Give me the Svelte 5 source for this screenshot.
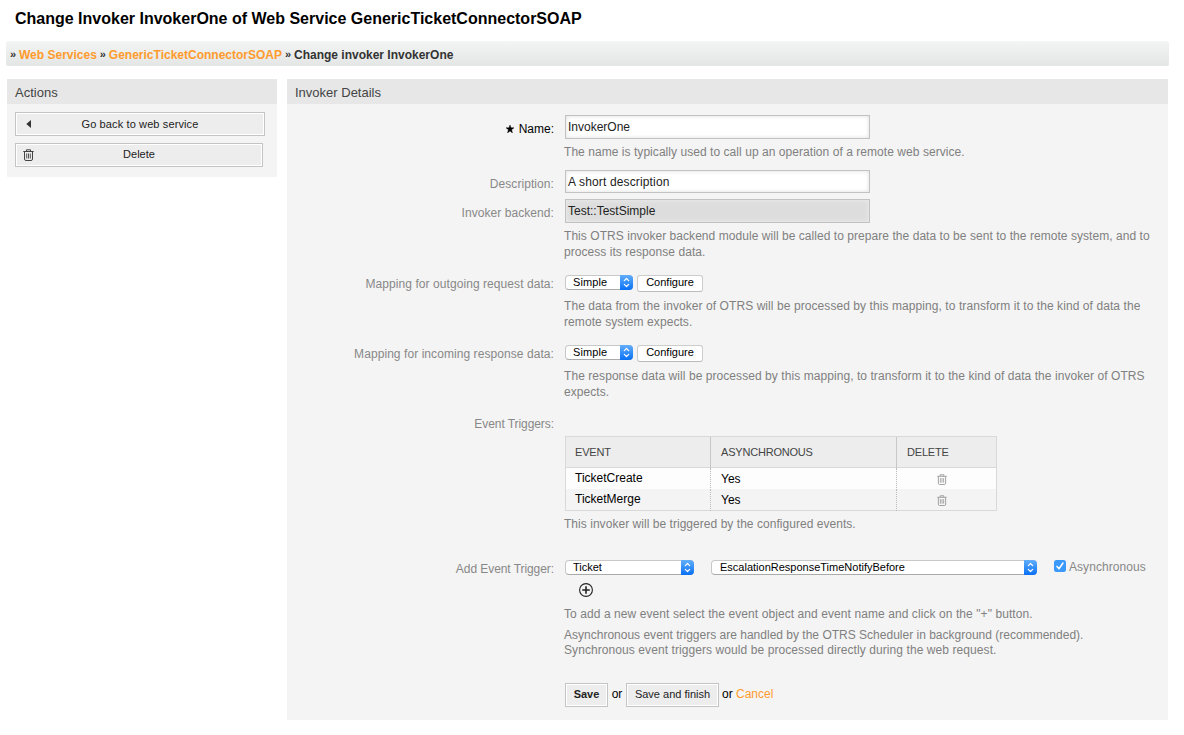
<script>
  const events = ['TicketCreate', 'TicketMerge'];
  const mappings = [
    {
      label: 'Mapping for outgoing request data:',
      hint: ['The data from the invoker of OTRS will be processed by this mapping, to transform it to the kind of data the', 'remote system expects.'],
      tracking: 0.075
    },
    {
      label: 'Mapping for incoming response data:',
      hint: ['The response data will be processed by this mapping, to transform it to the kind of data the invoker of OTRS', 'expects.'],
      tracking: 0.065
    }
  ];
</script>

{#snippet trash()}
  <svg class="trash" viewBox="0 0 11 12" width="11" height="12" fill="none" stroke="currentColor">
    <path d="M0.3 2.5H10.7M3.5 2.3V0.8H7.5V2.3M1.5 2.7V10Q1.5 11.5 3 11.5H8Q9.5 11.5 9.5 10V2.7" />
    <path d="M3.7 4.5V9.5M5.5 4.5V9.5M7.3 4.5V9.5" stroke-width="0.9" />
  </svg>
{/snippet}

{#snippet select(text, cls)}
  <div class="select {cls}">
    <span>{text}</span>
    <i>
      <svg viewBox="0 0 13 15" width="13" height="15" fill="none" stroke="#fff" stroke-width="1.2" stroke-linecap="round" stroke-linejoin="round">
        <path d="M4.3 5.7L6.5 3.5L8.7 5.7M4.3 9.3L6.5 11.5L8.7 9.3" />
      </svg>
    </i>
  </div>
{/snippet}

<div class="page">
  <h1>Change Invoker InvokerOne of Web Service GenericTicketConnectorSOAP</h1>
  <nav><b>»</b><a>Web Services</a><b>»</b><a>GenericTicketConnectorSOAP</a><b>»</b><span>Change invoker InvokerOne</span></nav>

  <div class="columns">
    <aside>
      <h2>Actions</h2>
      <div class="actions">
        <div class="btn back">
          <svg viewBox="0 0 5 8" width="5" height="8"><path d="M5 0V8L0.3 4Z" fill="#333" /></svg>
          <span>Go back to web service</span>
        </div>
        <div class="btn del">{@render trash()}<span>Delete</span></div>
      </div>
    </aside>

    <main>
      <h2>Invoker Details</h2>
      <div class="form">
        <div class="row name">
          <div class="label required">
            <svg viewBox="0 0 8 8" width="8" height="8"><path d="M4 0L5 2.8H8L5.6 4.7L6.5 8L4 6.1L1.5 8L2.4 4.7L0 2.8H3Z" stroke="#000" stroke-width="0.4" /></svg>Name:
          </div>
          <div class="field">
            <div class="input">InvokerOne</div>
            <p>The name is typically used to call up an operation of a remote web service.</p>
          </div>
        </div>
        <div class="row desc">
          <div class="label">Description:</div>
          <div class="field"><div class="input">A short description</div></div>
        </div>
        <div class="row backend">
          <div class="label">Invoker backend:</div>
          <div class="field">
            <div class="input readonly">Test::TestSimple</div>
            <p>This OTRS invoker backend module will be called to prepare the data to be sent to the remote system, and to<br />process its response data.</p>
          </div>
        </div>
        {#each mappings as m}
          <div class="row mapping">
            <div class="label">{m.label}</div>
            <div class="field">
              <div class="controls">
                {@render select('Simple', 'small')}
                <div class="configure">Configure</div>
              </div>
              <p style="letter-spacing: {m.tracking}px">{m.hint[0]}<br />{m.hint[1]}</p>
            </div>
          </div>
        {/each}
        <div class="row triggers">
          <div class="label">Event Triggers:</div>
          <div class="field">
            <div class="table">
              <div class="tr head"><span>EVENT</span><span>ASYNCHRONOUS</span><span>DELETE</span></div>
              {#each events as e}
                <div class="tr"><span>{e}</span><span class="yes">Yes</span><span class="bin">{@render trash()}</span></div>
              {/each}
            </div>
            <p>This invoker will be triggered by the configured events.</p>
          </div>
        </div>
        <div class="row add">
          <div class="label">Add Event Trigger:</div>
          <div class="field">
            <div class="controls">
              {@render select('Ticket', 'medium')}
              {@render select('EscalationResponseTimeNotifyBefore', 'large')}
              <svg class="check" viewBox="0 0 12 12" width="12" height="12">
                <rect width="12" height="12" rx="2.5" fill="#3b99fc" />
                <path d="M3 6.4L5 8.8L9 3" fill="none" stroke="#fff" stroke-width="1.5" stroke-linecap="round" stroke-linejoin="round" />
              </svg>
              <span class="async">Asynchronous</span>
            </div>
            <svg class="plus" viewBox="0 0 14 14" width="14" height="14" fill="none" stroke="#222">
              <circle cx="7" cy="7" r="6.4" stroke-width="1.1" />
              <path d="M7 3.2V10.8M3.2 7H10.8" stroke-width="1.6" />
            </svg>
            <p class="how">To add a new event select the event object and event name and click on the "+" button.</p>
            <p class="extra">Asynchronous event triggers are handled by the OTRS Scheduler in background (recommended).<br /><span>Synchronous event triggers would be processed directly during the web request.</span></p>
          </div>
        </div>
        <div class="row">
          <div class="label"></div>
          <div class="field submit">
            <div class="btn save">Save</div><span class="or">or</span>
            <div class="btn finish">Save and finish</div><span class="or2">or</span>
            <a>Cancel</a>
          </div>
        </div>
      </div>
    </main>
  </div>
</div>

<style>
  :global(body) { margin: 0; background: #fff; }
  .page, .page * { box-sizing: border-box; }
  .page {
    width: 1184px; height: 735px; overflow: hidden;
    font: 12px/16px "Liberation Sans", Arial, sans-serif;
    color: #000; white-space: nowrap;
  }
  h1 { margin: 0; padding: 9px 0 0 15px; height: 41px; font-size: 16px; line-height: 20px; font-weight: bold; }
  nav {
    display: flex; width: 1163px; height: 25px; margin-left: 6px; padding-left: 4px;
    border-radius: 2px; background: linear-gradient(#f3f5f5, #e3e6e5);
    font-weight: bold; line-height: 28px; color: #333;
  }
  nav b { width: 9px; font-size: 11px; line-height: 27px; }
  nav a + b { width: 12px; padding-left: 3px; }
  a { color: #ff9b2d; }
  .columns { display: flex; align-items: flex-start; gap: 10px; padding: 13px 0 0 7px; }
  aside { width: 270px; height: 98px; background: #f4f4f4; }
  main { width: 881px; height: 641px; background: #f4f4f4; }
  h2 { margin: 0; height: 25px; padding-left: 8px; background: #e7e7e7; font-size: 13px; font-weight: normal; line-height: 27px; color: #444; }
  .actions { padding: 8px 0 0 8px; }
  .btn {
    display: flex; align-items: center; height: 24px; border: 1px solid #c4c4c4;
    box-shadow: inset 0 0 0 1px #fff; background: #ededed; font-size: 11px; color: #222;
  }
  .back { width: 250px; padding-left: 10px; margin-bottom: 7px; }
  .back span { flex: 1; text-align: center; padding-right: 15px; letter-spacing: 0.12px; }
  .del { width: 248px; padding-left: 7px; color: #444; }
  .del span { flex: 1; text-align: center; padding: 0 18px 2px 0; color: #222; }
  .form { padding-top: 11px; }
  .row { display: flex; }
  .label { width: 267px; text-align: right; color: #888; padding-top: 6px; margin-right: 11px; letter-spacing: 0.07px; }
  .required { color: #000; letter-spacing: 0; }
  .required svg { margin-right: 5px; vertical-align: 0; }
  p { margin: 0 0 0 -1px; color: #808080; letter-spacing: 0.05px; }
  .input {
    width: 305px; height: 24px; padding-left: 2px; line-height: 22px; color: #222;
    background: #fff; border: 1px solid #c2c2c2; box-shadow: inset 0 0 4px #ddd;
  }
  .readonly { background: #ddd; box-shadow: inset 0 0 5px #eee; }
  .name { height: 55px; }
  .name p { padding-top: 5px; }
  .desc { height: 29px; }
  .desc .input { height: 23px; letter-spacing: 0.15px; }
  .backend { height: 76px; }
  .backend p { padding-top: 5px; }
  .mapping { height: 70px; }
  .mapping .label, .triggers .label { padding-top: 1px; }
  .triggers .label, .add .label { letter-spacing: -0.07px; }
  .controls { display: flex; }
  .select {
    display: flex; justify-content: space-between; height: 15px; padding-left: 7px;
    border: 1px solid #c8c8c8; border-bottom-color: #aaa; border-radius: 4px;
    background: #fff; font-size: 11px; line-height: 13px;
  }
  .select i { width: 13px; height: 15px; margin: -1px -1px 0 0; border-radius: 0 4px 4px 0; background: linear-gradient(#62aefb, #0870f5); }
  .select svg { display: block; }
  .small { width: 68px; }
  .medium { width: 129px; margin-right: 17px; }
  .large { width: 326px; margin-right: 17px; padding-left: 8px; }
  .small span { letter-spacing: 0.1px; }
  .configure {
    width: 66px; height: 17px; margin-left: 4px; border: 1px solid #ccc; border-bottom-color: #bbb;
    border-radius: 3px; background: #fff; font-size: 11px; line-height: 13px; text-align: center;
  }
  .mapping p { padding-top: 6px; }
  .triggers { height: 144px; }
  .table { width: 432px; height: 75px; margin-top: 21px; border: 1px solid #d9d9d9; }
  .tr { display: grid; grid-template-columns: 145px 186px 99px; height: 21px; background: #fdfdfd; line-height: 20px; }
  .tr:last-child { background: #f4f4f4; }
  .tr span { padding-left: 9px; border-right: 1px dotted #bbb; }
  .tr span + span { padding-left: 10px; }
  .tr span:last-child { border-right: 0; }
  .tr .yes { line-height: 22px; }
  .tr.head { height: 31px; background: #ededed; border-bottom: 1px solid #d9d9d9; font-size: 11px; line-height: 31px; color: #444; letter-spacing: -0.2px; }
  .head span { border-right: 1px solid #c8c8c8; }
  .tr .bin { padding: 6px 0 0 40px; color: #999; line-height: 0; }
  .bin .trash { width: 10px; height: 11px; }
  .triggers p { padding-top: 5px; letter-spacing: 0.04px; }
  .add { height: 124px; }
  .add .label { padding-top: 2px; }
  .add .controls { padding-top: 1px; height: 24px; }
  .check { margin: 0 3px 0 0; }
  .async { line-height: 14px; color: #888; letter-spacing: 0.06px; }
  .plus { display: block; margin-left: 14px; }
  .add p { padding-top: 9px; }
  .add .how { letter-spacing: 0.08px; }
  .add .extra { padding-top: 6px; line-height: 15px; letter-spacing: 0.005px; }
  .extra span { letter-spacing: 0.08px; }
  .submit { display: flex; line-height: 22px; }
  .submit .btn { justify-content: center; padding-bottom: 2px; }
  .save { width: 43px; font-weight: bold; }
  .finish { width: 93px; }
  .or { width: 18px; text-align: center; }
  .or2 { width: 17px; padding-left: 3px; }
</style>
